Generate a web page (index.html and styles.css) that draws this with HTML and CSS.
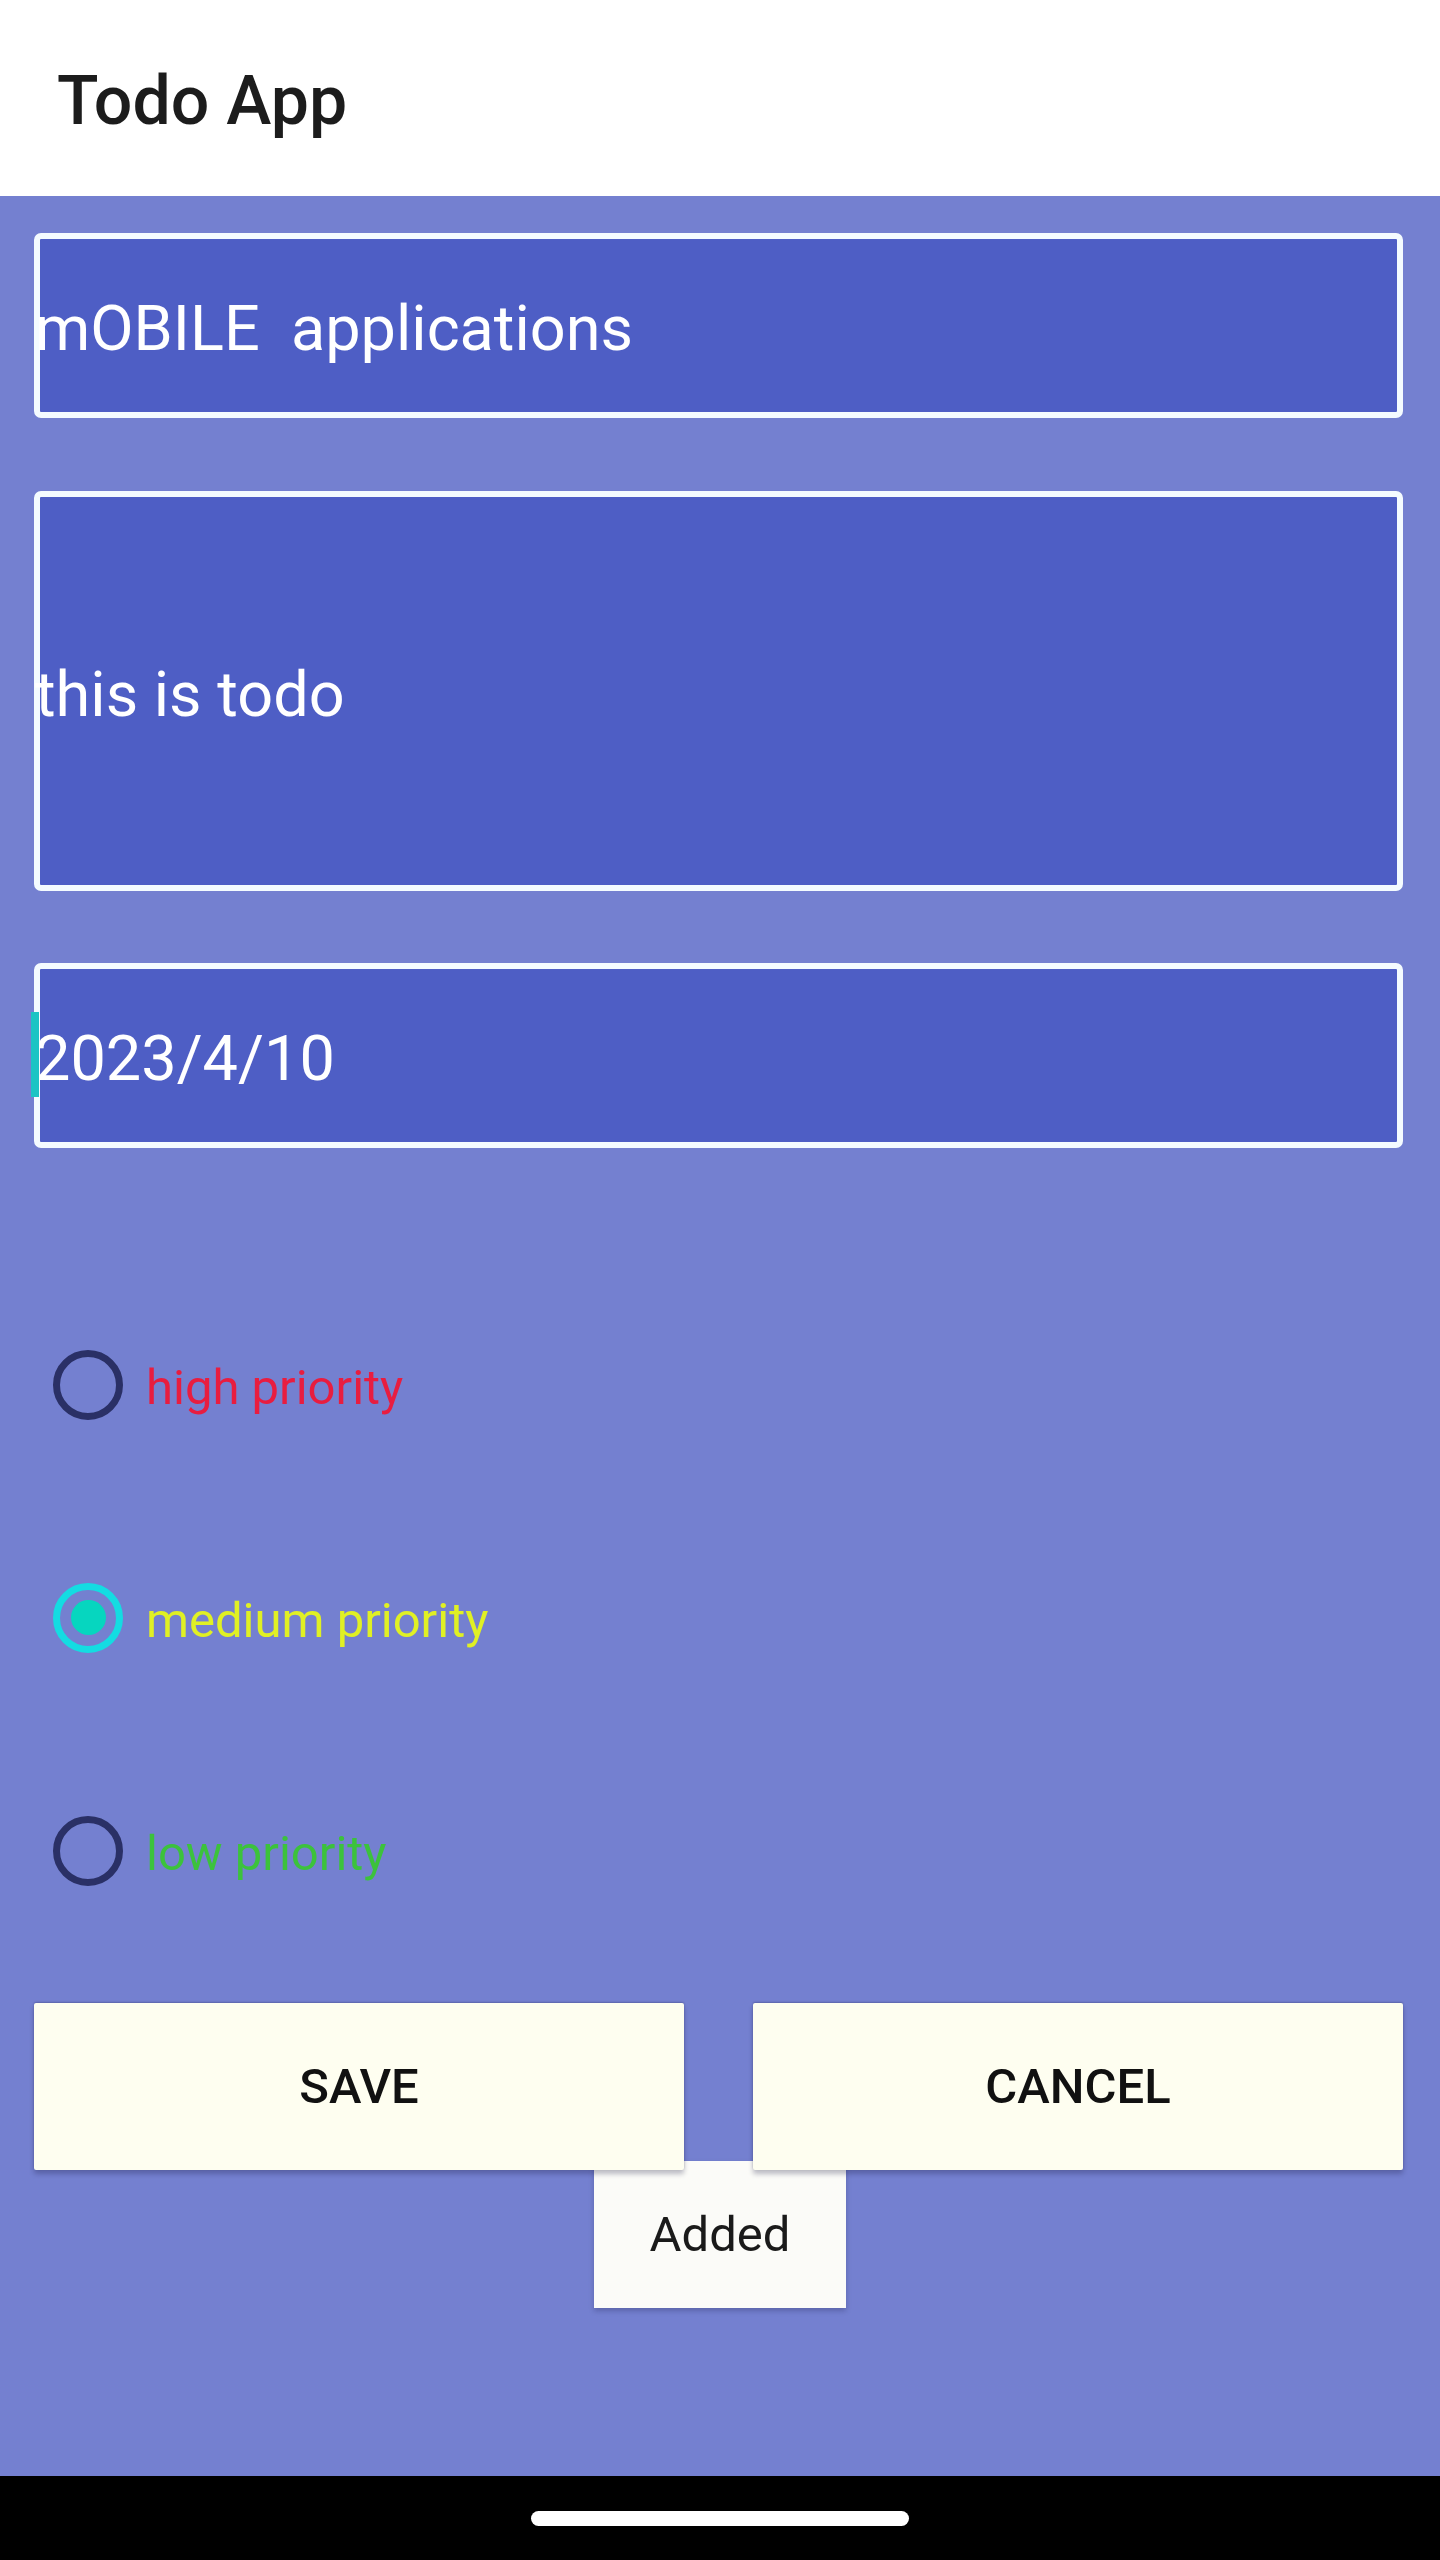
FILE: index.html
```html
<!DOCTYPE html>
<html lang="en">
<head>
<meta charset="utf-8">
<title>Todo App</title>
<link rel="stylesheet" href="styles.css">
</head>
<body>
<div class="screen">
  <header class="appbar">
    <h1 class="appbar-title">Todo App</h1>
  </header>
  <main class="content">
    <div class="field field-short"><span class="field-text">mOBILE  applications</span></div>
    <div class="field field-tall"><span class="field-text">this is todo</span></div>
    <div class="field field-short field-date">
      <span class="cursor-handle"></span>
      <span class="field-text">2023/4/10</span>
    </div>

    <div class="radio-group">
      <label class="radio-row">
        <span class="radio"></span>
        <span class="radio-label label-high">high priority</span>
      </label>
      <label class="radio-row">
        <span class="radio radio-on"></span>
        <span class="radio-label label-medium">medium priority</span>
      </label>
      <label class="radio-row">
        <span class="radio"></span>
        <span class="radio-label label-low">low priority</span>
      </label>
    </div>

    <div class="button-row">
      <button class="btn">SAVE</button>
      <button class="btn">CANCEL</button>
    </div>

    <div class="toast">Added</div>
  </main>
  <footer class="navbar">
    <span class="nav-handle"></span>
  </footer>
</div>
</body>
</html>
```

FILE: styles.css
```css
* {
  box-sizing: border-box;
}

html, body {
  margin: 0;
  padding: 0;
}

body {
  width: 1440px;
  height: 2560px;
  font-family: Roboto, "Liberation Sans", Arial, sans-serif;
  background: #7480d0;
}

.screen {
  width: 1440px;
  height: 2560px;
  display: flex;
  flex-direction: column;
}

.appbar {
  height: 196px;
  background: #ffffff;
  display: flex;
  align-items: center;
  padding-left: 57px;
  padding-top: 6px;
  flex-shrink: 0;
}

.appbar-title {
  margin: 0;
  font-size: 68px;
  font-weight: 500;
  color: #1c1c1c;
  line-height: 1;
}

.content {
  position: relative;
  flex: 1;
  background: #7480d0;
  padding: 37px 37px 0 34px;
  display: flex;
  flex-direction: column;
}

.field {
  position: relative;
  border: 6px solid #f4fbff;
  border-radius: 7px;
  background: #4e5ec5;
  display: flex;
  align-items: center;
  padding-top: 6px;
}

.field-short {
  height: 185px;
}

.field-tall {
  height: 400px;
  margin-top: 73px;
}

.field-date {
  margin-top: 72px;
}

.field-text {
  color: #ffffff;
  font-size: 63px;
  white-space: pre;
  line-height: 1;
  margin-left: -5px;
}

.cursor-handle {
  position: absolute;
  left: -9px;
  top: 43px;
  width: 8px;
  height: 85px;
  background: #1cc4c4;
}

.radio-group {
  margin-top: 120px;
  display: flex;
  flex-direction: column;
}

.radio-row {
  height: 233px;
  display: flex;
  align-items: center;
  padding-left: 19px;
}

.radio {
  position: relative;
  width: 70px;
  height: 70px;
  border: 7px solid #2a3066;
  border-radius: 50%;
  flex-shrink: 0;
}

.radio-on {
  border-color: #14dce2;
}

.radio-on::after {
  content: "";
  position: absolute;
  left: 10.5px;
  top: 10.5px;
  width: 35px;
  height: 35px;
  border-radius: 50%;
  background: #06d6bf;
}

.radio-label {
  margin-left: 23px;
  font-size: 49px;
  line-height: 1;
  padding-top: 6px;
}

.label-high {
  color: #e81d40;
}

.label-medium {
  color: #e0f024;
}

.label-low {
  color: #3cc23c;
}

.button-row {
  margin-top: 36px;
  display: flex;
  gap: 69px;
  position: relative;
  z-index: 2;
}

.btn {
  flex: 1;
  height: 167px;
  border: none;
  border-radius: 2px;
  background: #fefef0;
  font-family: Roboto, "Liberation Sans", Arial, sans-serif;
  font-size: 49px;
  font-weight: 500;
  color: #111111;
  box-shadow: 0 4px 5px rgba(20, 20, 60, 0.28), 0 -1px 2px rgba(20, 20, 60, 0.25);
  padding: 0;
}

.toast {
  position: absolute;
  left: 594px;
  top: 1965px;
  width: 252px;
  height: 147px;
  background: #fbfbf8;
  color: #1a1a1a;
  font-size: 49px;
  display: flex;
  align-items: center;
  justify-content: center;
  box-shadow: 0 3px 5px rgba(20, 20, 60, 0.25);
  z-index: 1;
}

.navbar {
  height: 84px;
  background: #000000;
  display: flex;
  justify-content: center;
  padding-top: 35px;
  flex-shrink: 0;
}

.nav-handle {
  width: 378px;
  height: 15px;
  border-radius: 8px;
  background: #ffffff;
}
```
